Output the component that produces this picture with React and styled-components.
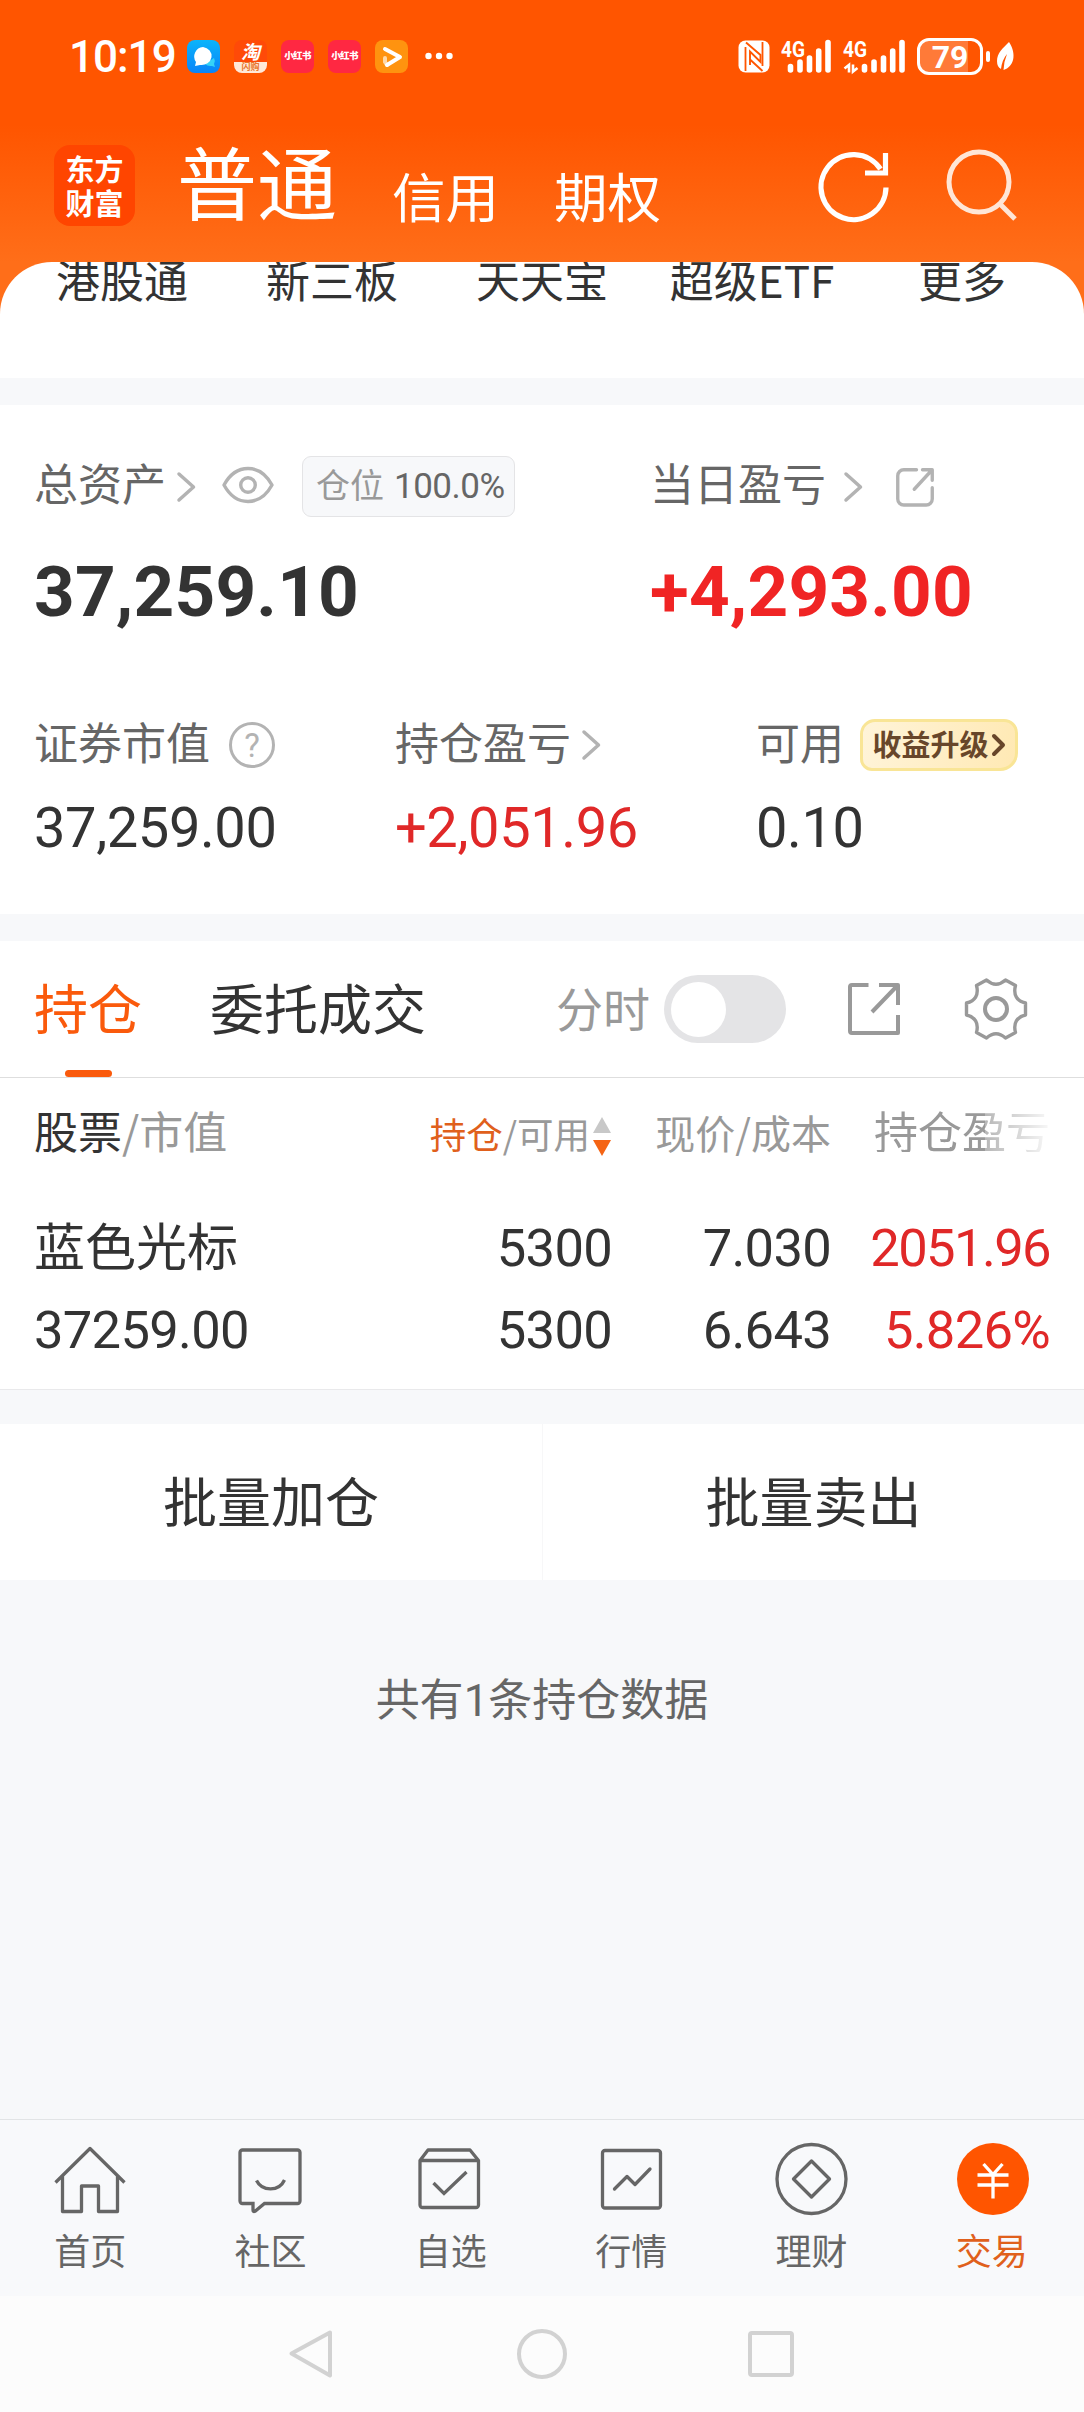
import React from "react"
import styled, { createGlobalStyle } from "styled-components"

const menu = ["港股通", "新三板", "天天宝", "超级ETF", "更多"]

const App = () => {
    return (
        <Phone>
            <GlobalStyle />
            <Header>
                <StatusBar>
                    <Time>10:19</Time>
                    <AppIcons>
                        <ChatIcon />
                        <TaoIcon>
                            <TaoTop>淘</TaoTop>
                            <TaoBottom>闪购</TaoBottom>
                        </TaoIcon>
                        <RedIcon>小红书</RedIcon>
                        <RedIcon>小红书</RedIcon>
                        <VideoIcon />
                        <MoreDots />
                    </AppIcons>
                    <NfcIcon />
                    <Signal left={11} />
                    <Signal left={12} data />
                    <Battery>
                        <Level>79</Level>
                    </Battery>
                    <BatteryTail />
                </StatusBar>
                <TitleBar>
                    <Logo>
                        <span>东方</span>
                        <span>财富</span>
                    </Logo>
                    <MainTitle>普通</MainTitle>
                    <SubTitle>信用</SubTitle>
                    <SubTitle>期权</SubTitle>
                    <TitleActions>
                        <RefreshIcon />
                        <SearchIcon />
                    </TitleActions>
                </TitleBar>
            </Header>

            <MenuCard>
                <MenuRow>
                    {menu.map(item => <MenuItem key={item}>{item}</MenuItem>)}
                </MenuRow>
            </MenuCard>

            <Account>
                <TopGrid>
                    <div>
                        <LabelRow height={61}>
                            <Label>总资产</Label>
                            <Chevron gap={9} />
                            <EyeIcon />
                            <Position>仓位<b>100.0%</b></Position>
                        </LabelRow>
                        <BigNumber>37,259.10</BigNumber>
                    </div>
                    <div>
                        <LabelRow height={61}>
                            <Label>当日盈亏</Label>
                            <Chevron gap={16} />
                            <ShareIcon size={42} gap={30} round />
                        </LabelRow>
                        <BigNumber up>+4,293.00</BigNumber>
                    </div>
                </TopGrid>
                <BottomGrid>
                    <div>
                        <LabelRow height={52}>
                            <Label>证券市值</Label>
                            <HelpMark>?</HelpMark>
                        </LabelRow>
                        <Number>37,259.00</Number>
                    </div>
                    <div>
                        <LabelRow height={52}>
                            <Label>持仓盈亏</Label>
                            <Chevron gap={9} />
                        </LabelRow>
                        <Number up>+2,051.96</Number>
                    </div>
                    <div>
                        <LabelRow height={52}>
                            <Label>可用</Label>
                            <Upgrade>
                                收益升级
                                <svg width="15" height="24" viewBox="0 0 15 24">
                                    <path d="M3 3l9 9-9 9" fill="none" stroke="#68462a" strokeWidth="4" strokeLinecap="round" strokeLinejoin="round" />
                                </svg>
                            </Upgrade>
                        </LabelRow>
                        <Number>0.10</Number>
                    </div>
                </BottomGrid>
            </Account>

            <Holdings>
                <TabRow>
                    <Tab active><span>持仓</span></Tab>
                    <Tab><span>委托成交</span></Tab>
                    <Tools>
                        <ToolLabel>分时</ToolLabel>
                        <Toggle><Knob /></Toggle>
                        <ShareIcon size={56} gap={60} />
                        <GearIcon />
                    </Tools>
                </TabRow>
                <TableHead>
                    <HeadCell left><Dark>股票</Dark>/市值</HeadCell>
                    <HeadCell size={36.5}>
                        <Accent>持仓</Accent>/可用
                        <SortIcon />
                    </HeadCell>
                    <HeadCell size={40}>现价/成本</HeadCell>
                    <HeadCell><Faded>持仓盈亏</Faded></HeadCell>
                </TableHead>
                <TableRow>
                    <Name>蓝色光标</Name>
                    <Cell>5300</Cell>
                    <Cell>7.030</Cell>
                    <Cell up spacing={-1.6}>2051.96</Cell>
                </TableRow>
                <TableRow>
                    <Cell left>37259.00</Cell>
                    <Cell>5300</Cell>
                    <Cell>6.643</Cell>
                    <Cell up>5.826%</Cell>
                </TableRow>
            </Holdings>

            <BatchRow>
                <BatchButton>批量加仓</BatchButton>
                <BatchButton>批量卖出</BatchButton>
            </BatchRow>

            <Summary>共有<b>1</b>条持仓数据</Summary>

            <TabBar>
                <TabItem>
                    <TabIcon>
                        <path d="M2.5 38.5L37 4.500L71.500 38.500M9.500 32V67.500H28.500V42H45.500V67.500H64.500V32" strokeLinejoin="round" />
                    </TabIcon>
                    首页
                </TabItem>
                <TabItem>
                    <TabIcon>
                        <path d="M9.500 6H64.500a2.500 2.500 0 0 1 2.500 2.500V57a2.500 2.500 0 0 1-2.500 2.500H31.500L22 67.300q-2 1-2-1.300V59.500H9.500A2.500 2.500 0 0 1 7 57V8.500A2.500 2.500 0 0 1 9.500 6z" />
                        <path d="M23.500 36.500C29 47.500 46 48 51.500 36" />
                    </TabIcon>
                    社区
                </TabItem>
                <TabItem>
                    <TabIcon>
                        <path d="M6 16.500L14 6H56L64.500 16.500V61a2.500 2.500 0 0 1-2.500 2.500H8.500A2.500 2.500 0 0 1 6 61zM6 16.500H64.500" strokeLinejoin="round" />
                        <path d="M19.500 39L30 49.500L52.500 28" />
                    </TabIcon>
                    自选
                </TabItem>
                <TabItem>
                    <TabIcon>
                        <rect x="8.500" y="6.500" width="58" height="57.500" rx="2.500" />
                        <path d="M20.500 45L33 32.500L41 40.500L56 25" strokeLinecap="round" strokeLinejoin="round" />
                    </TabIcon>
                    行情
                </TabItem>
                <TabItem>
                    <TabIcon>
                        <circle cx="37.500" cy="35" r="34.500" />
                        <path d="M37.500 17L55.500 35L37.500 53L19.500 35z" strokeLinejoin="round" />
                    </TabIcon>
                    理财
                </TabItem>
                <TabItem active>
                    <TabIcon>
                        <circle cx="38" cy="35" r="36" fill="#ff5500" stroke="none" />
                        <path d="M28.500 20L38 30.500L47.500 20M22.500 31H53.500M22.500 41H53.500M38 30V54.500" stroke="#fff" />
                    </TabIcon>
                    交易
                </TabItem>
            </TabBar>

            <NavBar>
                <NavIcon viewBox="0 0 50 50">
                    <path d="M44 3.500L5.500 24.500L44 46.500z" strokeLinejoin="round" />
                </NavIcon>
                <NavIcon viewBox="0 0 50 50">
                    <circle cx="26" cy="25" r="23" />
                </NavIcon>
                <NavIcon viewBox="0 0 50 50">
                    <rect x="4" y="4" width="42" height="42" rx="2" />
                </NavIcon>
            </NavBar>
        </Phone>
    )
}

export default App

const ChatIcon = () => (
    <svg width="33" height="33" viewBox="0 0 33 33">
        <defs>
            <linearGradient id="chat" x2="0" y2="1">
                <stop stopColor="#0ab4fb" />
                <stop offset="1" stopColor="#0a84f8" />
            </linearGradient>
        </defs>
        <rect width="33" height="33" rx="8" fill="url(#chat)" />
        <path d="M18 24a7 5 0 0 0 7 2l3 1-1-3a6 6 0 0 0 0-6z" fill="#35d3f7" />
        <path d="M16 7a10 9 0 1 1-3 18l-5 1 1-4A9.500 9.500 0 0 1 16 7z" fill="#fff" />
    </svg>
)

const VideoIcon = () => (
    <svg width="33" height="33" viewBox="0 0 33 33">
        <rect width="33" height="33" rx="8" fill="#ff930f" />
        <path d="M10 18V22L12 25" fill="none" stroke="#ffd9a8" strokeWidth="4" strokeLinecap="round" />
        <path d="M10 9L25 17L12 25" fill="none" stroke="#fff" strokeWidth="4" strokeLinecap="round" strokeLinejoin="round" />
    </svg>
)

const MoreDots = () => (
    <svg width="32" height="33" viewBox="0 0 32 33" fill="#fff">
        <circle cx="6.500" cy="16" r="3.200" />
        <circle cx="17" cy="16" r="3.200" />
        <circle cx="27.500" cy="16" r="3.200" />
    </svg>
)

const NfcIcon = () => (
    <svg width="32" height="33" viewBox="0 0 32 33">
        <rect x="0.500" y="0.500" width="31" height="32" rx="7" fill="#fff" />
        <path d="M7.500 7V31M24.500 2V26" stroke="#ff5500" strokeWidth="1.800" />
        <path d="M8 2.500L22.500 15V22L12 11.500V25M24.500 31L12 19.500" fill="none" stroke="#ff5500" strokeWidth="1.900" />
    </svg>
)

const Signal = ({ left, data }) => (
    <SignalSvg $left={left} width={data ? 62 : 50} height="38" viewBox={data ? "-12 0 62 38" : "0 0 50 38"}>
        <text x={data ? -12 : 0} y="18.500" textLength="24" lengthAdjust="spacingAndGlyphs">4G</text>
        <g stroke="#fff" strokeWidth="5.600" strokeLinecap="round">
            <path d="M9.500 28.500V32M19 24V32M28.500 20V32M37.700 13V32M47 4.500V32" />
        </g>
        {data && <path d="M-6 34.500V27L-10.500 30.500M-2 26.500V33.500L2.500 30" fill="none" stroke="#fff" strokeWidth="2.600" />}
    </SignalSvg>
)

const BatteryTail = () => (
    <svg width="32" height="34" viewBox="0 0 32 34">
        <rect x="3" y="11" width="4" height="11" rx="2" fill="#fff" />
        <path d="M26 2C20 8 14 13 14 21q0 6 4 8 1-9 6-15-3 7-3.500 16C31 27 34 14 26 2z" fill="#fff" />
    </svg>
)

const RefreshIcon = () => (
    <svg width="74" height="74" viewBox="0 0 74 74" fill="none" stroke="#fff" strokeWidth="5.200">
        <path d="M69 38.500A32.500 32.500 0 1 1 63.500 20" />
        <path d="M68.500 4V24H48" />
    </svg>
)

const SearchIcon = () => (
    <svg width="74" height="80" viewBox="0 0 74 80" fill="none" stroke="#ffe6d6" strokeWidth="5">
        <circle cx="34" cy="36" r="30" />
        <path d="M54 57L70 73" />
    </svg>
)

const Chevron = ({ gap }) => (
    <Shifted $gap={gap} width="22" height="32" viewBox="0 0 22 32">
        <path d="M4 3L18.500 16L4 29" fill="none" stroke="#b3b3b3" strokeWidth="3.500" strokeLinecap="round" strokeLinejoin="round" />
    </Shifted>
)

const EyeIcon = () => (
    <Shifted $gap={23} width="56" height="40" viewBox="0 0 56 40" fill="none" stroke="#b3b3b3" strokeWidth="3.400">
        <path d="M4 18C16 -4 40 -4 52 18C40 40 16 40 4 18z" strokeLinejoin="round" />
        <circle cx="28" cy="18" r="7.300" />
    </Shifted>
)

// the round variant is the small one beside a label
const ShareIcon = ({ size, gap, round }) => (
    <Shifted $gap={gap} width={size} height={size} viewBox="0 0 56 56" fill="none" stroke={round ? "#b3b3b3" : "#999"} strokeWidth={round ? 4.500 : 4}>
        {round ? (
            <path d="M30 5H13a8 8 0 0 0-8 8V44a8 8 0 0 0 8 8H43a8 8 0 0 0 8-8V29M38 5H51V19M50 6L27 31" strokeLinecap="round" strokeLinejoin="round" />
        ) : (
            <path d="M22.500 4H6a2 2 0 0 0-2 2V50a2 2 0 0 0 2 2H52V34M33 4H52V24M51 5L26 31" strokeLinejoin="round" />
        )}
    </Shifted>
)

const GearIcon = () => (
    <Shifted $gap={62} width="64" height="64" viewBox="-32 -32 64 64" fill="none" stroke="#999" strokeWidth="3.400">
        <path d="M-9.500 -29Q0 -20.500 9.500 -29L19.500 -23.500C17 -14 21 -8 29.500 -6V6C21 8 17 14 19.500 23.500L9.500 29Q0 20.500 -9.500 29L-19.500 23.500C-17 14 -21 8 -29.500 6V-6C-21 -8 -17 -14 -19.500 -23.500z" strokeLinejoin="round" />
        <circle r="11" strokeWidth="4" />
    </Shifted>
)

const SortIcon = () => (
    <SortSvg width="18" height="40" viewBox="0 0 18 40">
        <path d="M9 0L18 16H0z" fill="#c8c8c8" />
        <path d="M9 39L18 23H0z" fill="#f56414" />
    </SortSvg>
)

const GlobalStyle = createGlobalStyle`
    body {
        margin: 0;
        font-family: "Noto Sans CJK SC", sans-serif;
        color: #333;
        background: #f7f8fa;
    }

    svg {
        display: block;
        flex: none;
        overflow: visible;
    }
`

const Phone = styled.div`
    width: 1084px;
    height: 2412px;
    display: flex;
    flex-direction: column;
    overflow: hidden;
    white-space: nowrap;
`

const Header = styled.div`
    flex: none;
    height: 314px;
    background: linear-gradient(#ff5500 125px, #ff6e19 262px);
    color: white;
`

const StatusBar = styled.div`
    height: 113px;
    box-sizing: border-box;
    padding-left: 69px;
    display: flex;
    align-items: center;
`

const Time = styled.div`
    width: 118px;
    font-family: Roboto, sans-serif;
    font-size: 44px;
    font-weight: 500;
    line-height: 44px;
    letter-spacing: -1px;
`

const AppIcons = styled.div`
    width: 551px;
    display: flex;
    gap: 14px;
`

const RedIcon = styled.div`
    width: 33px;
    height: 33px;
    border-radius: 8px;
    background: #ff2842;
    font-size: 9.5px;
    font-weight: 900;
    line-height: 31px;
    letter-spacing: -.6px;
    text-align: center;
`

const TaoIcon = styled.div`
    width: 33px;
    height: 33px;
    border-radius: 8px;
    background: #ff4a08;
    text-align: center;
`

const TaoTop = styled.div`
    height: 22px;
    font-size: 19px;
    font-weight: 700;
    font-style: italic;
    line-height: 21px;
`

const TaoBottom = styled.div`
    height: 11px;
    border-radius: 0 0 8px 8px;
    background: #ffe9d8;
    color: #e8762c;
    font-size: 9px;
    font-weight: 700;
    line-height: 10px;
`

const SignalSvg = styled.svg`
    margin-left: ${props => props.$left}px;

    text {
        fill: white;
        font-family: Roboto, sans-serif;
        font-size: 22px;
        font-weight: 700;
    }
`

const Battery = styled.div`
    width: 66px;
    height: 37px;
    box-sizing: border-box;
    margin-left: 12px;
    border: 3px solid white;
    border-radius: 12px;
    background: linear-gradient(to right, rgba(255, 255, 255, .22) 48px, transparent 48px);
`

const Level = styled.div`
    font-family: Roboto, sans-serif;
    font-size: 32px;
    font-weight: 700;
    line-height: 32px;
    text-align: center;
`

const TitleBar = styled.div`
    height: 93px;
    margin-top: 26px;
    padding: 0 65px 0 54px;
    display: flex;
    align-items: center;
`

const Logo = styled.div`
    width: 81px;
    height: 81px;
    border-radius: 16px;
    background: #ff4500;
    font-size: 29px;
    font-weight: 700;
    line-height: 33px;
    display: flex;
    flex-direction: column;
    align-items: center;
    justify-content: center;

    span {
        margin-bottom: 1px;
    }
`

const MainTitle = styled.div`
    margin-left: 42px;
    padding-bottom: 13px;
    font-size: 80px;
    line-height: 80px;
`

const SubTitle = styled.div`
    margin-left: 55px;
    padding-top: 18px;
    font-size: 53.5px;
    line-height: 54px;
`

const TitleActions = styled.div`
    margin-left: auto;
    display: flex;
    align-items: center;
    gap: 54px;
`

const MenuCard = styled.div`
    flex: none;
    height: 116px;
    margin-top: -52px;
    border-radius: 52px 52px 0 0;
    background: white;
    overflow: hidden;
`

const MenuRow = styled.div`
    margin: -5px 17px 0;
    display: grid;
    grid-template-columns: repeat(5, 1fr);
`

const MenuItem = styled.div`
    font-size: 44px;
    line-height: 44px;
    text-align: center;
`

const Account = styled.div`
    flex: none;
    height: 509px;
    box-sizing: border-box;
    margin-top: 27px;
    padding: 51px 34px 0;
    background: white;
`

const TopGrid = styled.div`
    display: grid;
    grid-template-columns: 616px 1fr;
`

const BottomGrid = styled.div`
    margin-top: 92px;
    display: grid;
    grid-template-columns: 361px 361px 1fr;
`

const LabelRow = styled.div`
    height: ${props => props.height}px;
    display: flex;
    align-items: center;
`

const Label = styled.div`
    padding-bottom: 9px;
    color: #666;
    font-size: 44px;
    line-height: 44px;
`

const Shifted = styled.svg`
    margin-left: ${props => props.$gap}px;
`

const Position = styled.div`
    width: 213px;
    height: 61px;
    box-sizing: border-box;
    margin-left: 26px;
    padding-left: 13px;
    border: 1px solid #e4e4e6;
    border-radius: 9px;
    background: #f7f8fa;
    color: #999;
    font-size: 34px;
    line-height: 54px;

    b {
        margin-left: 10px;
        color: #666;
        font-family: Roboto, sans-serif;
        font-size: 35px;
        font-weight: 400;
        letter-spacing: -.5px;
    }
`

const BigNumber = styled.div`
    margin-top: 40px;
    color: ${props => props.up ? "#f02424" : "#333"};
    font-family: Roboto, sans-serif;
    font-size: 71px;
    font-weight: 700;
    line-height: 70px;
    letter-spacing: .2px;
`

const HelpMark = styled.div`
    width: 46px;
    height: 46px;
    box-sizing: border-box;
    margin-left: 19px;
    border: 3px solid #b3b3b3;
    border-radius: 50%;
    color: #b3b3b3;
    font-family: Roboto, sans-serif;
    font-size: 33px;
    line-height: 41px;
    text-align: center;
`

const Number = styled.div`
    margin-top: 29px;
    color: ${props => props.up ? "#e02828" : "#333"};
    font-family: Roboto, sans-serif;
    font-size: 56px;
    line-height: 56px;
    letter-spacing: -.4px;
`

const Upgrade = styled.div`
    width: 158px;
    height: 52px;
    box-sizing: border-box;
    margin-left: 16px;
    border: 3px solid #f9e596;
    border-radius: 15px 14px 18px 12px;
    background: linear-gradient(100deg, #fff4d9, #ffe9b4);
    color: #68462a;
    font-size: 29px;
    font-weight: 700;
    line-height: 43px;
    display: flex;
    justify-content: center;

    svg {
        margin: 11px 0 0 2px;
    }
`

const Holdings = styled.div`
    flex: none;
    height: 449px;
    box-sizing: border-box;
    margin-top: 27px;
    border-bottom: 1px solid #e9e9eb;
    background: white;
`

const TabRow = styled.div`
    height: 136px;
    padding: 0 56px 0 34px;
    border-bottom: 1px solid #dedede;
    display: flex;
    gap: 68px;
`

const Tab = styled.div`
    display: grid;
    grid-template-rows: 129px 7px;
    justify-items: center;
    color: ${props => props.active ? "#fa5a0c" : "#333"};
    font-size: 54px;
    line-height: 131px;

    &::after {
        content: "";
        width: 47px;
        border-radius: 4px;
        background: ${props => props.active ? "#fa5a0c" : "transparent"};
    }
`

const Tools = styled.div`
    margin-left: auto;
    display: flex;
    align-items: center;
`

const ToolLabel = styled.div`
    padding-bottom: 4px;
    color: #999;
    font-size: 47px;
    line-height: 48px;
`

const Toggle = styled.div`
    width: 122px;
    height: 68px;
    box-sizing: border-box;
    margin-left: 14px;
    padding: 6.5px;
    border-radius: 34px;
    background: #e4e4e6;
`

const Knob = styled.div`
    width: 55px;
    height: 55px;
    border-radius: 50%;
    background: white;
`

const TableHead = styled.div`
    height: 95px;
    padding: 30px 34px 0;
    display: grid;
    grid-template-columns: 1fr 250px 219px 219px;
    align-items: baseline;
`

const HeadCell = styled.div`
    display: flex;
    justify-content: ${props => props.left ? "flex-start" : "flex-end"};
    color: #999;
    font-size: ${props => props.size || 44}px;
    line-height: 44px;
`

const Dark = styled.span`
    color: #333;
`

const Accent = styled.span`
    color: #e0601c;
`

const SortSvg = styled.svg`
    margin: 5px 1px 0 3px;
`

const Faded = styled.span`
    mask-image: linear-gradient(to right, #000 63%, rgba(0, 0, 0, .7) 63%, rgba(0, 0, 0, .1) 98%);
`

const TableRow = styled.div`
    height: 82px;
    padding: 0 34px;
    display: grid;
    grid-template-columns: 1fr 250px 219px 219px;
`

const Name = styled.div`
    font-size: 51px;
    line-height: 82px;
`

const Cell = styled.div`
    color: ${props => props.up ? "#e02828" : "#333"};
    font-family: Roboto, sans-serif;
    font-size: 52.5px;
    line-height: 91px;
    letter-spacing: ${props => props.spacing || -.7}px;
    text-align: ${props => props.left ? "left" : "right"};
`

const BatchRow = styled.div`
    flex: none;
    height: 156px;
    margin-top: 34px;
    background: white;
    display: grid;
    grid-template-columns: 1fr 1fr;
`

const BatchButton = styled.div`
    font-size: 54px;
    line-height: 152px;
    text-align: center;

    & + & {
        border-left: 1px solid #f7f7f8;
    }
`

const Summary = styled.div`
    flex: 1;
    padding-top: 95px;
    color: #666;
    font-size: 44px;
    line-height: 44px;
    text-align: center;

    b {
        font-family: Roboto, sans-serif;
        font-weight: 400;
    }
`

const TabBar = styled.div`
    flex: none;
    height: 177px;
    box-sizing: border-box;
    padding: 24px 2px 0 0;
    border-top: 1px solid #e2e4e6;
    background: #f8f9fb;
    display: grid;
    grid-template-columns: repeat(6, 1fr);
`

const TabItem = styled.div`
    display: flex;
    flex-direction: column;
    align-items: center;
    gap: 11px;
    color: ${props => props.active ? "#e0601c" : "#666"};
    font-size: 36px;
    line-height: 40px;
`

const TabIcon = styled.svg.attrs({ viewBox: "0 0 74 74" })`
    width: 74px;
    height: 74px;
    fill: none;
    stroke: #666;
    stroke-width: 3.3px;
`

const NavBar = styled.div`
    flex: none;
    height: 116px;
    padding: 0 198px 0 196px;
    background: #fcfcfc;
    display: grid;
    grid-template-columns: repeat(3, 1fr);
    align-items: center;
    justify-items: center;
`

const NavIcon = styled.svg`
    width: 50px;
    height: 50px;
    fill: none;
    stroke: #d2d2d2;
    stroke-width: 4px;
`
